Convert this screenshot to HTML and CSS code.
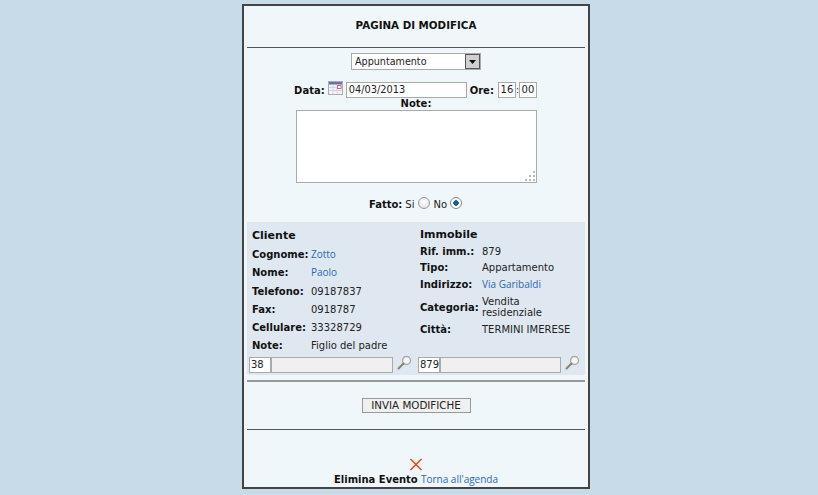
FILE: index.html
```html
<!DOCTYPE html>
<html lang="it">
<head>
<meta charset="utf-8">
<title>Pagina di modifica</title>
<link rel="stylesheet" href="styles.css">
</head>
<body>
<main class="panel">
  <h1 class="title">PAGINA DI MODIFICA</h1>
  <hr class="rule">
  <div class="select-row">
    <div class="select"><span class="select-text">Appuntamento</span><span class="select-btn"><svg width="7" height="4" viewBox="0 0 7 4"><path d="M0 0h7L3.500 4z" fill="#111"/></svg></span></div>
  </div>
  <div class="date-row">
    <b>Data:</b>
    <svg class="cal" width="15" height="14" viewBox="0 0 15 14"><rect x=".5" y=".5" width="14" height="13" fill="#f4f4f6" stroke="#aab"/><rect x="1" y="1" width="13" height="2.500" fill="#6a6fb0"/><path d="M1 6.500h13M1 9.500h13M5 4v9M9 4v9" stroke="#d5d5dc" fill="none"/><rect x="9.500" y="4.500" width="3.500" height="3" fill="#fff" stroke="#d66"/></svg>
    <span class="input date-input">04/03/2013</span>
    <b class="ore">Ore:</b>
    <span class="input time-input">16</span><span class="colon">:</span><span class="input time-input">00</span>
  </div>
  <div class="note-label"><b>Note:</b></div>
  <div class="textarea"><svg class="grip" width="11" height="11" viewBox="0 0 11 11" fill="#bbb"><rect x="8" y="0" width="2" height="2"/><rect x="4" y="4" width="2" height="2"/><rect x="8" y="4" width="2" height="2"/><rect x="0" y="8" width="2" height="2"/><rect x="4" y="8" width="2" height="2"/><rect x="8" y="8" width="2" height="2"/></svg></div>
  <div class="done-row">
    <b>Fatto:</b> <span>Si</span><span class="radio"></span><span>No</span><span class="radio checked"></span>
  </div>
  <section class="info">
    <div class="col col-left">
      <h2 class="col-title">Cliente</h2>
      <div class="row r-a"><b class="lab">Cognome:</b><a class="link">Zotto</a></div>
      <div class="row r-b"><b class="lab">Nome:</b><a class="link">Paolo</a></div>
      <div class="row r-c"><b class="lab">Telefono:</b><span>09187837</span></div>
      <div class="row"><b class="lab">Fax:</b><span>0918787</span></div>
      <div class="row"><b class="lab">Cellulare:</b><span>33328729</span></div>
      <div class="row"><b class="lab">Note:</b><span>Figlio del padre</span></div>
      <div class="lookup">
        <span class="input code">38</span><span class="input desc"></span>
        <svg class="lens" width="15" height="15" viewBox="0 0 15 15"><circle cx="9.500" cy="5.500" r="4" fill="#f4f6f8" stroke="#aaa" stroke-width="1.400"/><path d="M6.500 8.500L1.500 13.500" stroke="#8a8070" stroke-width="2" stroke-linecap="round"/></svg>
      </div>
    </div>
    <div class="col col-right">
      <h2 class="col-title">Immobile</h2>
      <div class="r-row r1"><b class="r-lab">Rif. imm.:</b><span>879</span></div>
      <div class="r-row r2"><b class="r-lab">Tipo:</b><span>Appartamento</span></div>
      <div class="r-row r3"><b class="r-lab">Indirizzo:</b><a class="link">Via Garibaldi</a></div>
      <div class="r-row r4"><b class="r-lab">Categoria:</b><span class="tight">Vendita residenziale</span></div>
      <div class="r-row r5"><b class="r-lab">Città:</b><span>TERMINI IMERESE</span></div>
      <div class="lookup lookup-right">
        <span class="input code">879</span><span class="input desc"></span>
        <svg class="lens" width="15" height="15" viewBox="0 0 15 15"><circle cx="9.500" cy="5.500" r="4" fill="#f4f6f8" stroke="#aaa" stroke-width="1.400"/><path d="M6.500 8.500L1.500 13.500" stroke="#8a8070" stroke-width="2" stroke-linecap="round"/></svg>
      </div>
    </div>
  </section>
  <hr class="rule thick">
  <div class="submit-row"><button class="submit" type="button">INVIA MODIFICHE</button></div>
  <hr class="rule">
  <div class="footer">
    <svg class="del" width="14" height="13" viewBox="0 0 14 13"><path d="M1.500 1L12.500 12M12.500 1L1.500 12" stroke="#e8492c" stroke-width="1.600" fill="none"/></svg>
    <div class="footer-text"><b>Elimina Evento</b> <a class="link">Torna all'agenda</a></div>
  </div>
</main>
</body>
</html>
```
FILE: styles.css
```css
html, body { margin: 0; padding: 0; }
body {
  background: #c8dbe9;
  height: 495px;
  overflow: hidden;
  font-family: "DejaVu Sans", Verdana, sans-serif;
  font-size: 10px;
  color: #222;
}
b { color: #111; font-size: 10px; }
.panel {
  box-sizing: border-box;
  width: 348px;
  height: 485px;
  margin: 4px 0 0 242px;
  background: #f0f7fb;
  border: 2px solid #444;
  padding: 0 3px;
}
.title {
  margin: 0;
  padding-top: 13px;
  height: 28px;
  text-align: center;
  font-size: 10.300px;
  line-height: 12px;
  color: #111;
}
.rule { margin: 0; border: 0; border-top: 1px solid #555; height: 0; }
.rule.thick { border-top: 2px solid #999; margin-top: 5px; }
.select-row { display: flex; justify-content: center; margin-top: 5px; }
.select {
  box-sizing: border-box; width: 130px; height: 17px;
  border: 1px solid #aaa; background: #fff; display: flex; align-items: center; justify-content: space-between;
  padding-left: 3px; font-size: 9.600px;
}
.select-btn {
  width: 15px; height: 15px; background: #d0d0d0; border: 1px solid #555; box-sizing: border-box;
  display: flex; align-items: center; justify-content: center;
}
.date-row { display: flex; justify-content: center; align-items: center; margin-top: 12px; height: 16px; padding-right: 1px; }
.cal { margin: -4px 3px 0 3px; }
.input {
  box-sizing: border-box; display: inline-block; height: 16px; line-height: 14px;
  border: 1px solid #aaa; background: #fff; padding: 0 2px;
}
.date-input { width: 121px; font-size: 9.800px; }
.ore { margin-left: 3px; margin-right: 4px; }
.time-input { width: 18px; text-align: center; padding: 0; }
.colon { width: 3px; text-align: center; font-size: 9px; }
.note-label { text-align: center; height: 12px; line-height: 12px; }
.textarea {
  box-sizing: border-box; width: 241px; height: 73px; margin: 0 0 0 49px;
  border: 1px solid #aaa; background: #fff; display: flex; justify-content: flex-end; align-items: flex-end;
}
.grip { display: block; }
.done-row { display: flex; justify-content: center; align-items: center; height: 14px; margin-top: 14px; gap: 3px; padding-right: 1px; }
.radio {
  box-sizing: border-box; width: 12px; height: 12px; border-radius: 50%; border: 1px solid #999;
  background: radial-gradient(circle at 50% 35%, #fff, #ddd); margin: -3px 0 0 1px;
}
.radio.checked { background: radial-gradient(circle, #14608f 0 2.500px, #fff 3px); border-color: #888; margin-left: 0; }
.info {
  display: flex; margin-top: 11px; height: 153px; background: #dfe8f1; box-sizing: border-box;
  padding: 6px 2px 0 5px; overflow: hidden;
}
.col { display: flex; flex-direction: column; }
.col-left { width: 168px; padding-top: 1px; }
.col-right { flex: 1; }
.col-title { margin: 0; font-size: 11px; line-height: 14px; color: #111; font-weight: bold; }
.row { display: flex; height: 18px; align-items: center; }
.col-title + .row { margin-top: 2px; }
.r-c { margin-top: 1px; }
.lab { width: 59px; flex: none; }
.link { color: #2a68b4; font-family: "Open Sans", sans-serif; font-size: 10px; }
.r-row { display: flex; align-items: center; }
.r-lab { width: 62px; flex: none; }
.r1 { height: 17px; margin-top: 1px; }
.r2 { height: 15px; }
.r3 { height: 18px; }
.r4 { height: 28px; }
.r5 { height: 17px; }
.tight { line-height: 11.500px; width: 80px; }
.lookup { display: flex; align-items: center; margin: 2px 0 0 -3px; }
.code { width: 22px; padding: 0 1px; }
.desc { width: 122px; background: #f0f0f0; }
.lens { margin: -6px 0 0 4px; }
.lookup-right { margin-left: -2px; margin-top: auto; margin-bottom: 2px; }
.lookup-right .desc { width: 121px; }
.col-left .lookup { margin-top: 3px; }
.submit-row { display: flex; justify-content: center; height: 47px; align-items: center; }
.submit {
  box-sizing: border-box; width: 109px; height: 15px; padding: 0;
  border: 1px solid #999; background: #f0f0f0; font-family: inherit; font-size: 10.300px; color: #222; line-height: 13px;
}
.footer { display: flex; flex-direction: column; align-items: center; margin-top: 28px; }
.del { display: block; }
.footer-text { line-height: 14px; margin-top: 1px; }
```
